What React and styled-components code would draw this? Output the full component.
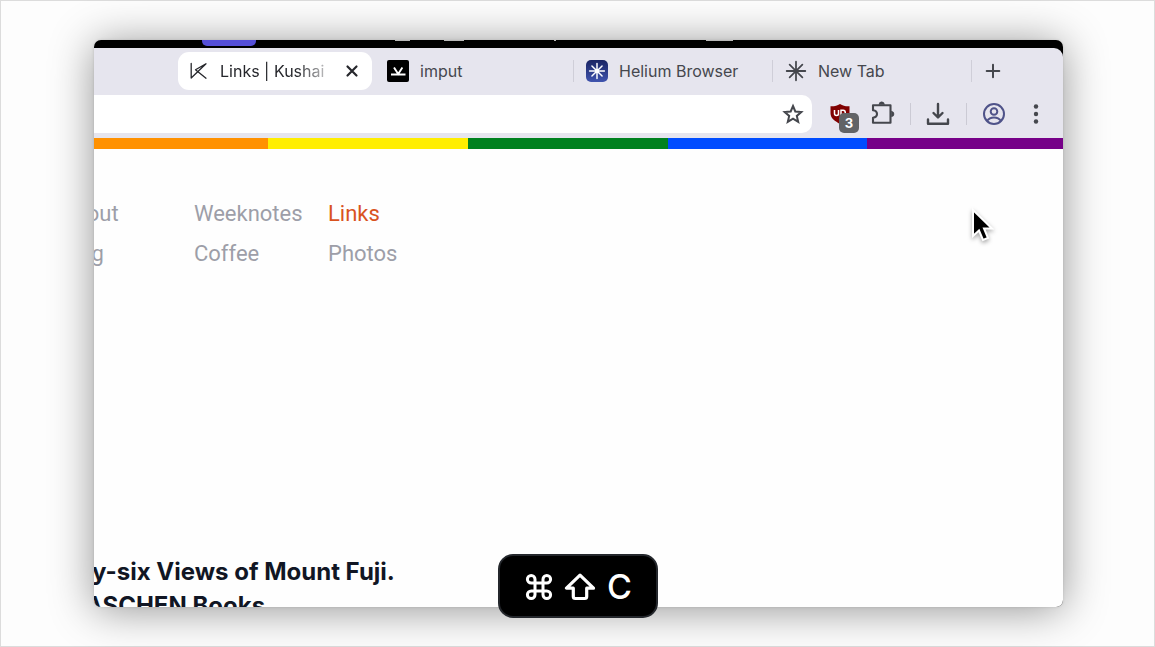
import React from "react";
import styled, { createGlobalStyle } from "styled-components";

const Global = createGlobalStyle`
  *, *::before, *::after { box-sizing: border-box; }
  body { margin: 0; background: #fdfdfd; font-family: Inter, "Liberation Sans", sans-serif; }
  button { border: 0; padding: 0; background: none; color: inherit; font: inherit; }
  svg { display: block; }
`;

const Desktop = styled.div`
  position: relative;
  display: flex;
  min-height: 100vh;
  padding: 39px 91px 39px 93px;
  border: 1px solid #dcdcdc;
`;

const BrowserWindow = styled.main`
  flex: 1;
  min-width: 0;
  display: flex;
  flex-direction: column;
  overflow: hidden;
  border-radius: 7px;
  background: #000;
  box-shadow: 0 3px 44px rgba(0, 0, 0, 0.42), 0 0 3px rgba(0, 0, 0, 0.12);
`;

const MenuStrip = styled.div`
  display: flex;
  height: 8px;
  padding-left: 108px;
`;

const MenuHighlight = styled.div`
  width: 54px;
  height: 6px;
  border-radius: 0 0 5px 5px;
  background: #554fd8;
`;

const MenuMark = styled.span`
  width: ${(p) => p.$width}px;
  height: 1px;
  margin-left: ${(p) => p.$gap}px;
  background: #b9b9b9;
`;

const Chrome = styled.header`
  background: #e6e5ee;
  border-top-right-radius: 9px;
  color: #45474d;
`;

const TabStrip = styled.nav`
  display: flex;
  align-items: center;
  height: 47px;
  padding: 0 0 1px 84px;
`;

const Tab = styled.button`
  display: flex;
  align-items: center;
  gap: 11px;
  flex: 0 1 199px;
  min-width: 0;
  height: 22px;
  padding-left: 12px;
  border-right: 1px solid #cfced8;
  font-size: 16px;
  line-height: 22px;
  text-align: left;
  white-space: nowrap;
`;

const ActiveTab = styled.div`
  display: flex;
  align-items: center;
  gap: 10px;
  flex: 0 1 194px;
  min-width: 0;
  height: 38px;
  margin-right: 3px;
  padding: 0 10px;
  border-radius: 11px;
  background: #fff;
  color: #26272c;
  font-size: 16px;
  line-height: 22px;
`;

const ActiveTitle = styled.span`
  flex: 1;
  min-width: 0;
  overflow: hidden;
  white-space: nowrap;
  mask-image: linear-gradient(90deg, #000 68%, transparent 105%);
`;

const IconButton = styled.button`
  position: relative;
  display: grid;
  place-items: center;
  flex: none;
  width: ${(p) => p.$size || 36}px;
  height: ${(p) => p.$size || 36}px;
`;

const Toolbar = styled.div`
  display: flex;
  align-items: center;
  gap: 6px;
  height: 43px;
  padding: 0 9px 5px 0;
`;

const AddressBar = styled.div`
  flex: 1;
  display: flex;
  align-items: center;
  height: 38px;
  margin-right: 4px;
  padding-right: 7px;
  border-radius: 0 10px 10px 0;
  background: #fff;
`;

const AddressInput = styled.input`
  flex: 1;
  min-width: 0;
  height: 30px;
  border: 0;
  background: none;
  font: inherit;
`;

const Divider = styled.span`
  width: 1px;
  height: 22px;
  margin: 0 3px 0 4px;
  background: #cbcad4;
`;

const Badge = styled.span`
  position: absolute;
  right: -1px;
  bottom: -1px;
  width: 20px;
  height: 20px;
  border-radius: 5px;
  background: #626366;
  color: #fff;
  font-size: 13px;
  font-weight: 700;
  line-height: 20px;
  text-align: center;
`;

const Rainbow = styled.div`
  display: grid;
  grid-template-columns: 174fr 200fr 200fr 199fr 196fr;
  height: 11px;
`;

const Stripe = styled.span`
  background: ${(p) => p.$color};
`;

const Page = styled.section`
  flex: 1;
  display: flex;
  flex-direction: column;
  justify-content: space-between;
  overflow: hidden;
  background: #fefefe;
`;

const SiteNav = styled.nav`
  display: grid;
  grid-template-columns: repeat(3, 134px);
  grid-auto-rows: 40px;
  align-items: center;
  margin: 45px 0 0 -34px;
  font-family: Roboto, "Liberation Sans", sans-serif;
  font-size: 22px;
  line-height: 30px;
`;

const SiteLink = styled.a`
  color: ${(p) => (p.$current ? "#d9531e" : "#9d9ea8")};
  text-decoration: none;
`;

const Caption = styled.h2`
  height: 52px;
  margin: 0 0 0 -59px;
  color: #111624;
  font-size: 24px;
  font-weight: 700;
  line-height: 34px;
  white-space: nowrap;
`;

const Shortcut = styled.div`
  position: absolute;
  bottom: 28px;
  left: 50%;
  transform: translateX(-50%);
  display: flex;
  align-items: center;
  justify-content: center;
  gap: 11px;
  width: 160px;
  height: 64px;
  padding: 2px 0 0 2px;
  border: 2px solid #24272c;
  border-radius: 15px;
  background: #000;
  color: #fff;
`;

const Key = styled.kbd`
  font-family: Inter, sans-serif;
  font-size: 34px;
  font-weight: 500;
  line-height: 40px;
`;

const Pointer = styled.svg`
  position: absolute;
  top: 206px;
  right: 160px;
  filter: drop-shadow(0 2px 2px rgba(0, 0, 0, 0.35));
`;

const stroke = { fill: "none", stroke: "currentColor", strokeLinecap: "round", strokeLinejoin: "round" };

const KIcon = () => (
  <svg width="22" height="22" viewBox="0 0 22 22" {...stroke} strokeWidth="1.3">
    <path d="M3.200 3.500v14.500L18 3.800 7.500 9.800 18 18.200" />
  </svg>
);

const ImputIcon = () => (
  <svg width="22" height="22" viewBox="0 0 22 22">
    <rect width="22" height="22" rx="2" fill="#000" />
    <path d="M4 14.500h14.500M7 7.500l4.200 6.500 4.200-6.500" fill="none" stroke="#fff" strokeWidth="1.900" />
  </svg>
);

const Burst = ({ r, ...rest }) => (
  <g {...rest} strokeLinecap="round">
    <path d="M11 1.500v19M1.500 11h19M4.500 4.500l13 13M17.500 4.500l-13 13" transform={`translate(11 11) scale(${r}) translate(-11 -11)`} />
  </g>
);

const HeliumIcon = () => (
  <svg width="22" height="22" viewBox="0 0 22 22">
    <defs>
      <linearGradient id="helium" x1="0" y1="0" x2="0" y2="1">
        <stop offset="0" stopColor="#1a2463" />
        <stop offset="1" stopColor="#4054ae" />
      </linearGradient>
    </defs>
    <rect width="22" height="22" rx="5" fill="url(#helium)" />
    <Burst r={0.78} stroke="#fff" strokeWidth="1.9" />
  </svg>
);

const NewTabIcon = () => (
  <svg width="22" height="22" viewBox="0 0 22 22">
    <Burst r={0.98} stroke="#45474d" strokeWidth="1.8" />
  </svg>
);

const CloseIcon = () => (
  <svg width="20" height="20" viewBox="0 0 20 20" {...stroke} strokeWidth="2.2">
    <path d="M5.500 5.500l9 9M14.500 5.500l-9 9" />
  </svg>
);

const PlusIcon = () => (
  <svg width="20" height="20" viewBox="0 0 20 20" {...stroke} strokeWidth="2">
    <path d="M10 3.700v12.600M3.700 10h12.600" />
  </svg>
);

const StarIcon = () => (
  <svg width="24" height="24" viewBox="0 0 24 24" fill="none" stroke="currentColor" strokeWidth="2">
    <path d="M12 4l2.300 5.500 6 .5-4.500 3.900 1.400 5.900L12 16.600l-5.200 3.200 1.400-5.900L3.700 10l6-.5z" />
  </svg>
);

const ShieldIcon = () => (
  <svg width="22" height="22" viewBox="0 0 22 22">
    <path d="M11 1c3 2 6 2.500 9.500 2.300v7c0 5.200-4.500 8-9.500 10.700C6 18.300 1.500 15.500 1.500 10.300v-7C5 3.500 8 3 11 1z" fill="#800000" />
    <path d="M5.500 7v3.500a2 2 0 0 0 4 0V7v5.500M12 15V7.200h2.200a2 2.400 0 0 1 0 5H12" fill="none" stroke="#fff" strokeWidth="1.500" />
  </svg>
);

const PuzzleIcon = () => (
  <svg width="26" height="26" viewBox="0 0 26 26" {...stroke} strokeWidth="2.100">
    <path d="M4 4.200h17.500v17.500H4v-5c2.500-.3 4-1.600 4-3.700S6.500 9.500 4 9.200z" />
    <path d="M10 3.500a2.700 2.700 0 0 1 5.400 0zM22.300 10.300v5.400a2.700 2.700 0 0 0 0-5.400z" fill="currentColor" strokeWidth="0.500" />
  </svg>
);

const DownloadIcon = () => (
  <svg width="26" height="26" viewBox="0 0 26 26" {...stroke} strokeWidth="2.400">
    <path d="M13 3v13M8.500 12l4.500 4.500 4.500-4.500M3 18.500v4.200h20v-4.200" />
  </svg>
);

const ProfileIcon = () => (
  <svg width="24" height="24" viewBox="0 0 24 24" fill="none" stroke="#4f5389" strokeWidth="2">
    <circle cx="12" cy="12" r="10" />
    <circle cx="12" cy="9.500" r="3.300" />
    <path d="M5 19c1.600-2.400 4-3.500 7-3.500s5.400 1.100 7 3.500" />
  </svg>
);

const DotsIcon = () => (
  <svg width="24" height="24" viewBox="0 0 24 24" fill="currentColor">
    <circle cx="12" cy="4.500" r="2.200" />
    <circle cx="12" cy="12" r="2.200" />
    <circle cx="12" cy="19.500" r="2.200" />
  </svg>
);

const CommandIcon = () => (
  <svg width="28" height="28" viewBox="0 0 28 28" fill="none" stroke="#fff" strokeWidth="3">
    <path d="M10 10V6.200A3.800 3.800 0 1 0 6.200 10h15.600A3.800 3.800 0 1 0 18 6.200v15.600a3.800 3.800 0 1 0 3.800-3.800H6.200a3.800 3.800 0 1 0 3.800 3.800V10z" />
  </svg>
);

const ShiftIcon = () => (
  <svg width="32" height="28" viewBox="0 0 32 28" {...stroke} stroke="#fff" strokeWidth="3.200">
    <path d="M16 2.200L2.500 15.200h6.800v8.300c0 1.200.8 2 2 2h9.400c1.200 0 2-.8 2-2v-8.300h6.800z" />
  </svg>
);

const stripes = ["#ff9100", "#ffee00", "#00811f", "#004cff", "#760088"];
const links = ["About", "Weeknotes", "Links", "Blog", "Coffee", "Photos"];

export default function App() {
  return (
    <>
      <Global />
      <Desktop>
        <BrowserWindow>
          <MenuStrip>
            <MenuHighlight />
            <MenuMark $gap={139} $width={15} />
            <MenuMark $gap={34} $width={20} />
            <MenuMark $gap={90} $width={2} />
            <MenuMark $gap={150} $width={27} />
          </MenuStrip>
          <Chrome>
            <TabStrip aria-label="Tabs">
              <ActiveTab>
                <KIcon />
                <ActiveTitle>Links | Kushai</ActiveTitle>
                <IconButton $size={20} aria-label="Close tab"><CloseIcon /></IconButton>
              </ActiveTab>
              <Tab><ImputIcon />imput</Tab>
              <Tab><HeliumIcon />Helium Browser</Tab>
              <Tab><NewTabIcon />New Tab</Tab>
              <IconButton $size={42} aria-label="New tab"><PlusIcon /></IconButton>
            </TabStrip>
            <Toolbar>
              <AddressBar>
                <AddressInput aria-label="Address" />
                <IconButton $size={24} aria-label="Bookmark"><StarIcon /></IconButton>
              </AddressBar>
              <IconButton aria-label="Content blocker">
                <ShieldIcon />
                <Badge>3</Badge>
              </IconButton>
              <IconButton aria-label="Extensions"><PuzzleIcon /></IconButton>
              <Divider />
              <IconButton aria-label="Downloads"><DownloadIcon /></IconButton>
              <Divider />
              <IconButton aria-label="Profile"><ProfileIcon /></IconButton>
              <IconButton aria-label="Menu"><DotsIcon /></IconButton>
            </Toolbar>
          </Chrome>
          <Rainbow>
            {stripes.map((c) => <Stripe key={c} $color={c} />)}
          </Rainbow>
          <Page>
            <SiteNav aria-label="Site">
              {links.map((l) => (
                <SiteLink key={l} href={`#${l.toLowerCase()}`} $current={l === "Links"}>{l}</SiteLink>
              ))}
            </SiteNav>
            <Caption>Thirty-six Views of Mount Fuji.<br />By TASCHEN Books</Caption>
          </Page>
        </BrowserWindow>
        <Shortcut>
          <CommandIcon />
          <ShiftIcon />
          <Key>C</Key>
        </Shortcut>
        <Pointer width="24" height="38" viewBox="0 0 24 38" aria-hidden="true">
          <path d="M3 3v26l6-5.500 4 9.500 5-2-4-9.500h8z" fill="#000" stroke="#fff" strokeWidth="2" />
        </Pointer>
      </Desktop>
    </>
  );
}
